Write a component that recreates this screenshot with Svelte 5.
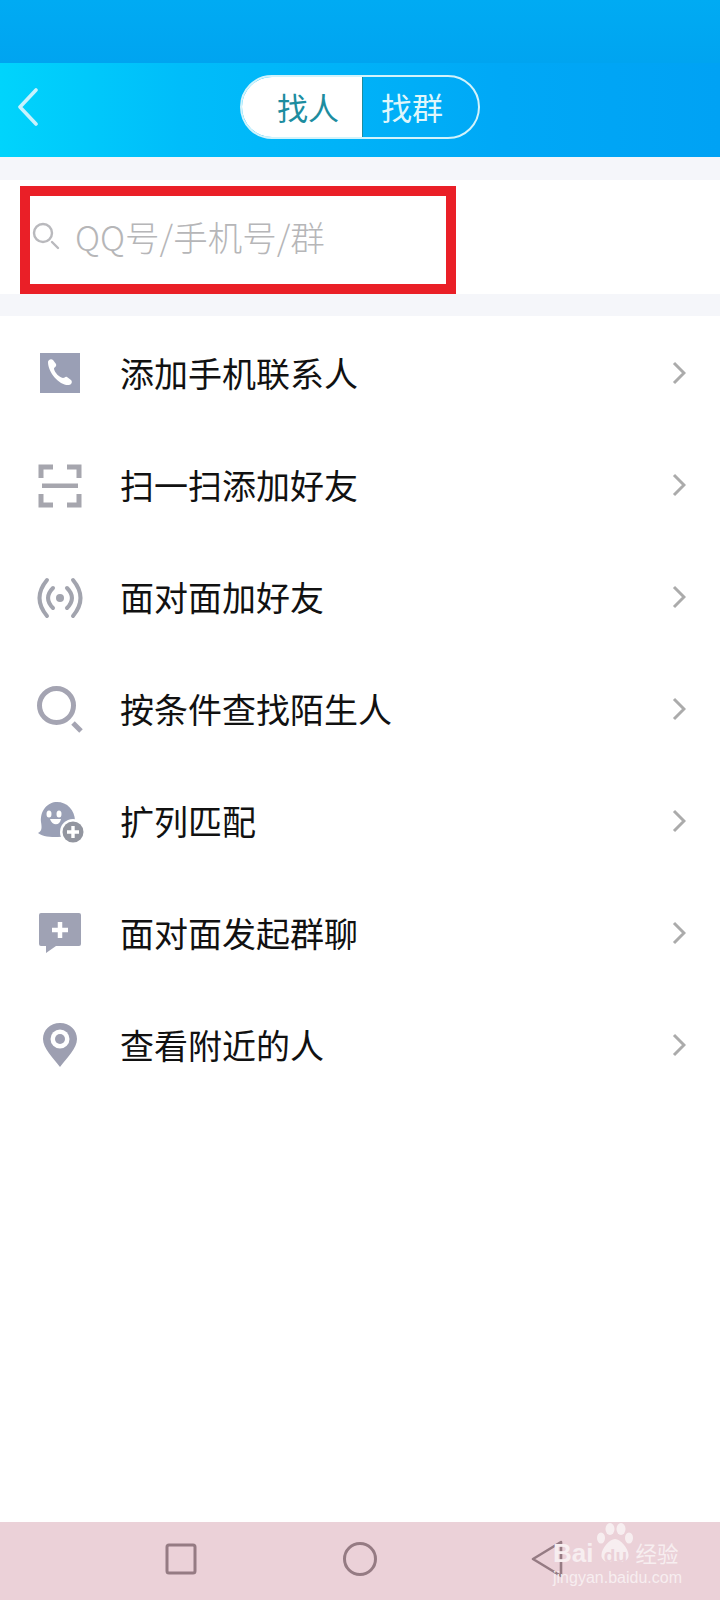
<script>
  // Rows of the add-friend list
  const rows = [
    { id: 'phone', label: '添加手机联系人' },
    { id: 'scan', label: '扫一扫添加好友' },
    { id: 'radar', label: '面对面加好友' },
    { id: 'search', label: '按条件查找陌生人' },
    { id: 'match', label: '扩列匹配' },
    { id: 'chat', label: '面对面发起群聊' },
    { id: 'pin', label: '查看附近的人' }
  ];
</script>

<main>
  <div class="status"></div>

  <header>
    <svg class="back" viewBox="0 0 22 38" width="22" height="38">
      <path d="M19 2 L3 19 L19 36" fill="none" stroke="#c8f2fd" stroke-width="3.6" stroke-linecap="round" stroke-linejoin="round" />
    </svg>
    <div class="toggle">
      <span class="tab active">找人</span>
      <span class="tab">找群</span>
    </div>
  </header>

  <section class="search">
    <div class="mark">
      <svg viewBox="0 0 28 28" width="28" height="28">
        <circle cx="11" cy="11" r="9" fill="none" stroke="#b9b9bd" stroke-width="2.4" />
        <path d="M20 20 L26 26" stroke="#b9b9bd" stroke-width="2.4" stroke-linecap="round" />
      </svg>
      <span class="placeholder">QQ号/手机号/群</span>
    </div>
  </section>

  <ul>
    {#each rows as row}
      <li>
        <svg class="icon" viewBox="0 0 44 44" width="44" height="44">
          {#if row.id === 'phone'}
            <rect x="2" y="1" width="40" height="40" fill="#9a9fb5" />
            <path d="M10 10 C10 8 13 6 15 8 L18 12 C19 15 16 15 16 17 C17 21 21 25 25 26 C27 26 27 24 29 25 L33 28 C35 30 33 33 31 33 C22 34 10 21 10 10 Z" fill="#fff" />
          {:else if row.id === 'scan'}
            <path d="M15 3 H3 V14 M29 3 H41 V14 M3 30 V41 H15 M41 30 V41 H29" fill="none" stroke="#a6a6ae" stroke-width="5" />
            <rect x="4" y="19.500" width="36" height="4.500" fill="#a6a6ae" />
          {:else if row.id === 'radar'}
            <circle cx="22" cy="22" r="4" fill="#a2a4ae" />
            <path d="M15 12 Q5 22 15 32 M29 12 Q39 22 29 32 M9 4 Q-6 22 9 40 M35 4 Q50 22 35 40" fill="none" stroke="#a2a4ae" stroke-width="4" stroke-linecap="round" />
          {:else if row.id === 'search'}
            <circle cx="18.500" cy="17.500" r="17" fill="none" stroke="#a4a4b2" stroke-width="5" />
            <path d="M35 35 L43 43" stroke="#a4a4b2" stroke-width="5" />
          {:else if row.id === 'match'}
            <path d="M0 33 C4 31 4 28 3 22 C2 10 10 2 19 2 C29 2 37 10 37 21 C37 30 30 37 20 37 C12 37 5 37 0 33 Z" fill="#9aa0b6" />
            <ellipse cx="11" cy="14" rx="2.500" ry="3.500" fill="#fff" />
            <ellipse cx="21" cy="14" rx="2.500" ry="3.500" fill="#fff" />
            <path d="M12 19 H23 C22 26 14 26 12 19 Z" fill="#fff" />
            <circle cx="35" cy="32" r="13" fill="#fff" />
            <circle cx="35" cy="32" r="10.500" fill="#92959f" />
            <path d="M35 26 V38 M29 32 H41" stroke="#fff" stroke-width="3.400" />
          {:else if row.id === 'chat'}
            <path d="M1 3 Q1 1 3 1 H41 Q43 1 43 3 V32 Q43 34 41 34 H18 L8 41 V34 H3 Q1 34 1 32 Z" fill="#9fa2b4" />
            <path d="M22 10 V26 M14 18 H30" stroke="#fff" stroke-width="4.500" />
          {:else if row.id === 'pin'}
            <path d="M22 -1 C32 -1 39 6 39 15 C39 24 29 34 22 43 C15 34 5 24 5 15 C5 6 12 -1 22 -1 Z" fill="#9d9fb1" />
            <circle cx="22" cy="15" r="9.500" fill="#fff" />
            <circle cx="22" cy="15" r="5" fill="#9d9fb1" />
          {/if}
        </svg>
        <span class="label">{row.label}</span>
        <svg class="chevron" viewBox="0 0 14 24" width="14" height="24">
          <path d="M2 2 L12 12 L2 22" fill="none" stroke="#ababab" stroke-width="3" />
        </svg>
      </li>
    {/each}
  </ul>

  <footer>
    <svg viewBox="0 0 32 32" width="32" height="32">
      <rect x="2" y="2" width="28" height="28" rx="2" fill="none" stroke="#957b83" stroke-width="3" />
    </svg>
    <svg viewBox="0 0 36 36" width="36" height="36">
      <circle cx="18" cy="18" r="15.500" fill="none" stroke="#957b83" stroke-width="3" />
    </svg>
    <svg class="nav-back" viewBox="0 0 34 38" width="34" height="38">
      <path d="M31 2 L3 19 L31 36 Z" fill="none" stroke="#957b83" stroke-width="2.600" stroke-linejoin="round" />
    </svg>

    <div class="watermark">
      <svg class="paw" viewBox="0 0 36 40" width="36" height="40">
        <ellipse cx="4" cy="15" rx="4" ry="5.500" />
        <ellipse cx="13" cy="6" rx="4.500" ry="6" />
        <ellipse cx="24" cy="6" rx="4.500" ry="6" />
        <ellipse cx="32" cy="15" rx="4" ry="5.500" />
        <path d="M18 16 C24 16 34 28 31 35 C28 41 23 38 18 38 C13 38 8 41 5 35 C2 28 12 16 18 16 Z" />
      </svg>
      <div class="brand">Bai<span class="du">du</span><span class="jy">经验</span></div>
      <div class="site">jingyan.baidu.com</div>
    </div>
  </footer>
</main>

<style>
  :global(body) {
    margin: 0;
    background: #fff;
  }

  main {
    display: flex;
    flex-direction: column;
    width: 720px;
    height: 1600px;
    font-family: "Noto Sans CJK SC", "Noto Sans", sans-serif;
    background: #f5f6fa;
  }

  .status {
    height: 63px;
    background: linear-gradient(180deg, #00abf3, #00a4f0);
  }

  header {
    display: grid;
    grid-template-columns: 1fr auto 1fr;
    align-items: center;
    height: 94px;
    padding-bottom: 6px;
    box-sizing: border-box;
    background: linear-gradient(90deg, #00d4fc 0%, #00bdfa 25%, #00a8f6 70%, #00a2f4 100%);
  }

  .back {
    margin-left: 17px;
  }

  .toggle {
    grid-column: 2;
    display: flex;
    width: 240px;
    height: 64px;
    box-sizing: border-box;
    border: 2px solid #d2f3fb;
    border-radius: 32px;
    overflow: hidden;
    margin-left: -1px;
  }

  .tab {
    display: flex;
    align-items: center;
    justify-content: center;
    flex: 1;
    padding: 0 16px 2px 0;
    font-size: 31px;
    color: #dff6fb;
  }

  .tab.active {
    flex: none;
    width: 121px;
    padding: 0 0 2px 13px;
    box-sizing: border-box;
    border-right: 1px solid #1d8d9f;
    background: #fff;
    color: #1d8d9f;
  }

  .search {
    margin-top: 23px;
    height: 114px;
    padding-top: 6px;
    box-sizing: border-box;
    background: #fff;
  }

  .mark {
    display: flex;
    align-items: center;
    gap: 15px;
    width: 436px;
    height: 108px;
    box-sizing: border-box;
    margin-left: 20px;
    padding: 0 0 9px 2px;
    border: 10px solid #ea1f27;
  }

  .placeholder {
    font-size: 34.500px;
    color: #b6b6b8;
    font-weight: 300;
  }

  ul {
    flex: 1;
    list-style: none;
    margin: 22px 0 0;
    padding: 2px 0 0;
    background: #fff;
  }

  li {
    display: flex;
    align-items: center;
    height: 112px;
    padding: 0 34px 0 38px;
  }

  .icon {
    flex: none;
    margin-right: 38px;
    overflow: visible;
  }

  .label {
    flex: 1;
    margin-bottom: 4px;
    font-size: 34px;
    color: #111;
    font-weight: 400;
  }

  .chevron {
    margin-bottom: 2px;
  }

  footer {
    position: relative;
    display: flex;
    align-items: center;
    gap: 145px;
    height: 78px;
    padding: 0 0 4px 165px;
    box-sizing: border-box;
    background: #ebd1d8;
  }

  .nav-back {
    margin-left: 7px;
  }

  .watermark {
    position: absolute;
    left: 553px;
    top: 0;
    width: 130px;
    color: #f7eef0;
    line-height: 1;
  }

  .paw {
    position: absolute;
    left: 44px;
    top: 1px;
    fill: #f7eef0;
  }

  .brand {
    position: absolute;
    top: 18px;
    left: 0;
    display: flex;
    align-items: baseline;
    white-space: nowrap;
    font-family: "Liberation Sans", sans-serif;
    font-size: 26px;
    font-weight: 700;
  }

  .du {
    width: 24px;
    margin-left: 10px;
    font-size: 19px;
    color: #ebd1d8;
    text-align: center;
  }

  .jy {
    margin-left: 8px;
    font-family: "Noto Sans CJK SC", sans-serif;
    font-size: 21.500px;
    font-weight: 400;
  }

  .site {
    position: absolute;
    top: 48px;
    left: 0;
    white-space: nowrap;
    font-family: "Liberation Sans", sans-serif;
    font-size: 16px;
  }
</style>
